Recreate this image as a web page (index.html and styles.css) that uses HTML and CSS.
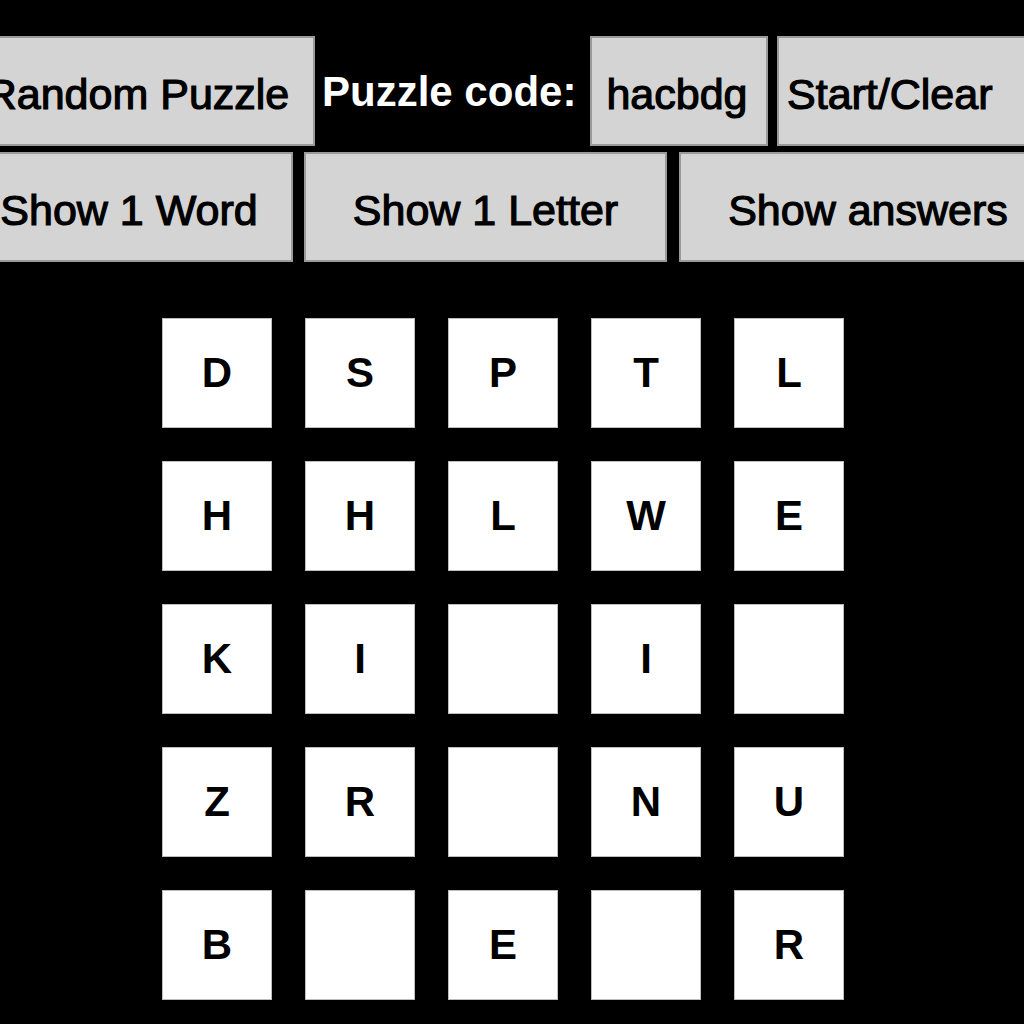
FILE: index.html
```html
<!DOCTYPE html>
<html>
<head>
<meta charset="utf-8">
<link rel="stylesheet" href="styles.css">
</head>
<body>
<div class="page">
  <div class="row row-top">
    <div class="btn btn-random">Random Puzzle</div>
    <div class="label">Puzzle code:</div>
    <div class="btn btn-code">hacbdg</div>
    <div class="btn btn-start">Start/Clear</div>
  </div>
  <div class="row row-bottom">
    <div class="btn btn-word">Show 1 Word</div>
    <div class="btn btn-letter">Show 1 Letter</div>
    <div class="btn btn-answers">Show answers</div>
  </div>
  <div class="grid">
    <div class="cell">D</div><div class="cell">S</div><div class="cell">P</div><div class="cell">T</div><div class="cell">L</div>
    <div class="cell">H</div><div class="cell">H</div><div class="cell">L</div><div class="cell">W</div><div class="cell">E</div>
    <div class="cell">K</div><div class="cell">I</div><div class="cell"></div><div class="cell">I</div><div class="cell"></div>
    <div class="cell">Z</div><div class="cell">R</div><div class="cell"></div><div class="cell">N</div><div class="cell">U</div>
    <div class="cell">B</div><div class="cell"></div><div class="cell">E</div><div class="cell"></div><div class="cell">R</div>
  </div>
</div>
</body>
</html>
```

FILE: styles.css
```css
html, body {
  margin: 0;
  padding: 0;
  background: #000;
  overflow: hidden;
}
body {
  width: 1024px;
  height: 1024px;
  font-family: "Liberation Sans", Helvetica, Arial, sans-serif;
}
.page {
  padding-top: 36px;
}
.row {
  display: flex;
  align-items: stretch;
  height: 110px;
  white-space: nowrap;
}
.row-top {
  margin-left: -40px;
}
.row-bottom {
  margin-top: 6px;
  margin-left: -35px;
}
.btn {
  box-sizing: border-box;
  background: #d4d4d4;
  border: 2px solid #9a9a9a;
  color: #000;
  font-size: 43px;
  -webkit-text-stroke: 1.2px #000;
  display: flex;
  align-items: center;
  justify-content: center;
  flex: none;
  padding-top: 6px;
}
.label {
  color: #fff;
  font-weight: bold;
  font-size: 42px;
  display: flex;
  align-items: center;
  flex: none;
  margin-left: 7px;
  margin-right: 12px;
  width: 256px;
  box-sizing: border-box;
  padding-top: 2px;
}
.btn-random { width: 355px; }
.btn-code { width: 178px; margin-right: 9px; padding-right: 4px; }
.btn-start { width: 280px; justify-content: flex-start; padding-left: 8px; }
.btn-word { width: 328px; margin-right: 11px; }
.btn-letter { width: 363px; margin-right: 12px; }
.btn-answers { width: 378px; }
.grid {
  display: grid;
  grid-template-columns: repeat(5, 110px);
  grid-auto-rows: 110px;
  gap: 33px;
  margin-top: 56px;
  margin-left: 162px;
}
.cell {
  box-sizing: border-box;
  background: #fff;
  border: 1px solid #bdbdbd;
  color: #000;
  font-weight: bold;
  font-size: 42px;
  display: flex;
  align-items: center;
  justify-content: center;
}
```
